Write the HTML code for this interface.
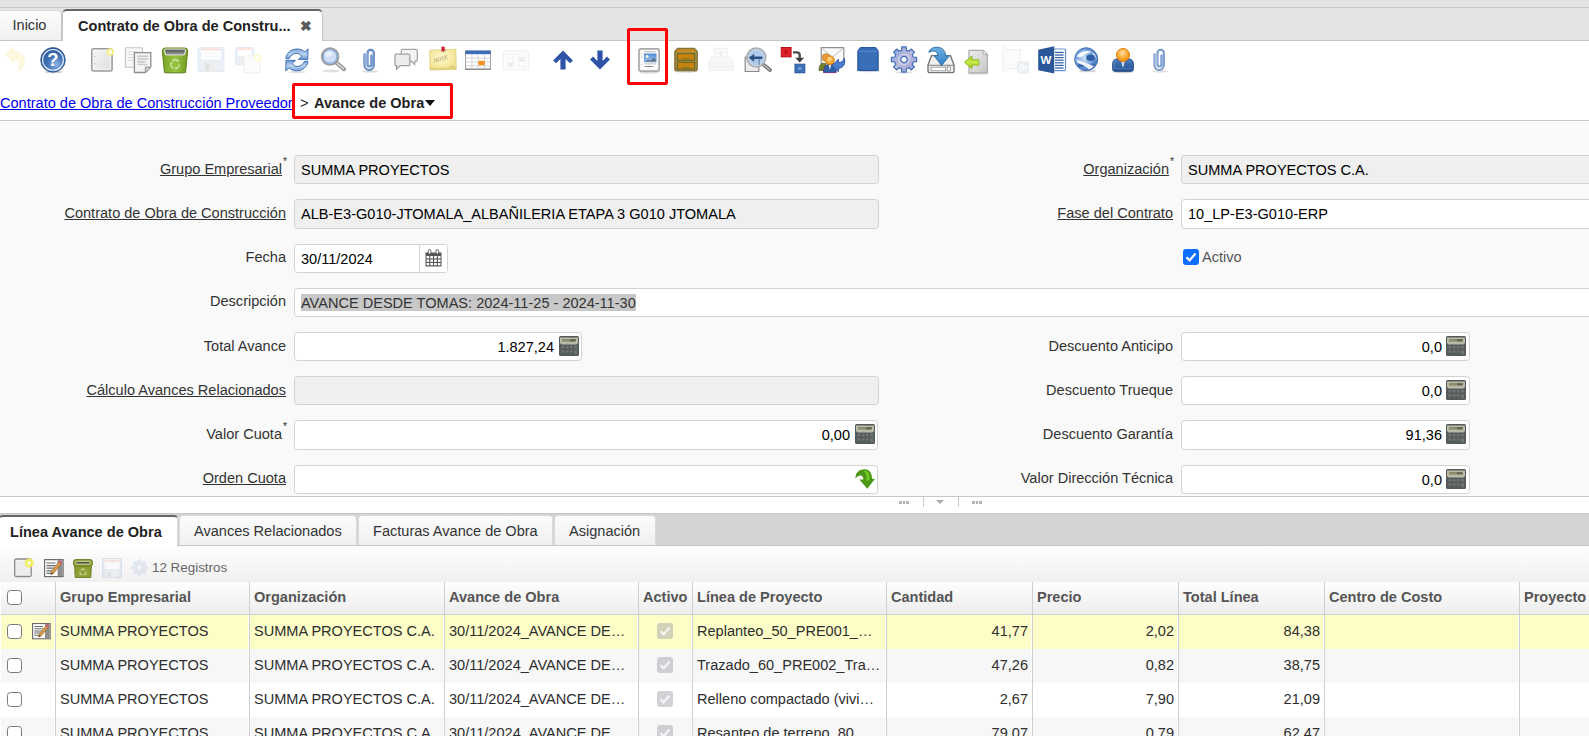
<!DOCTYPE html>
<html lang="es">
<head>
<meta charset="utf-8">
<title>Contrato de Obra de Construcción Proveedor</title>
<style>
*{box-sizing:border-box}
html,body{margin:0;padding:0}
body{width:1589px;height:736px;overflow:hidden;position:relative;background:#f9f9f9;font-family:"Liberation Sans",Arial,sans-serif;font-size:14.55px;color:#333}
.abs{position:absolute}
#topstrip{left:0;top:0;width:1589px;height:8px;background:#e4e4e4;border-bottom:1px solid #c9c9c9}
#tabbar{left:0;top:8px;width:1589px;height:33px;background:#e4e4e4;border-bottom:1px solid #c5c5c5}
.toptab{position:absolute;white-space:nowrap;font-size:14.55px;line-height:17px}
#tab1{left:-1px;top:10px;width:63px;height:31px;border:1px solid #c5c5c5;border-top-color:#d6d6d6;border-radius:0 5px 0 0;background:linear-gradient(#fdfdfd,#f0f0f0);padding:6px 0 0 12.500px;color:#333}
#tab2{left:62px;top:9px;width:261px;height:33px;border:1px solid #c5c5c5;border-top:2px solid #666;border-bottom:none;border-radius:5px 5px 0 0;background:#fff;padding:7px 0 0 15px;font-weight:bold;color:#222}
#tab2 .x{position:absolute;left:236.500px;top:7px;font-size:13.800px;color:#5a5a5a}
#toolbar{left:0;top:41px;width:1589px;height:43px;background:#fff}
#crumb{left:0;top:84px;width:1589px;height:37px;background:#fff;border-bottom:1px solid #c9c9c9}
#crumb a{position:absolute;left:0;top:11px;color:#0000ee;text-decoration:underline;white-space:nowrap;line-height:17px}
#crumb .gt{position:absolute;left:300px;top:11px;line-height:17px;color:#333}
#crumb .cur{position:absolute;left:314px;top:11px;line-height:17px;font-weight:bold;color:#222;white-space:nowrap}
#redbox1{left:627px;top:28px;width:41px;height:57px;border:3px solid #ff0000;border-radius:2px}
#redbox2{left:292px;top:83px;width:161px;height:36px;border:3px solid #ff0000;border-radius:2px}
#form{left:0;top:121px;width:1589px;height:376px;background:#f9f9f9;border-bottom:1px solid #c9c9c9}
.lbl{position:absolute;white-space:nowrap;line-height:17px;text-align:right;color:#333}
.lbl u{text-decoration:underline}
.lbl sup{position:absolute;right:-7px;top:-7px;font-size:11px;line-height:11px}
.fld{position:absolute;height:29px;border:1px solid #d2d2d2;border-radius:3.5px;background:#fff;padding:0 6px;line-height:29px;white-space:nowrap;overflow:hidden;color:#000}
.fld.ro{background:#efefef;border-color:#d2d2d2}
.fld.num{text-align:right;padding-right:27px}
#split{left:0;top:497px;width:1589px;height:16px;background:#fff}
#btabs{left:0;top:513px;width:1589px;height:33px;background:#d3d3d3;border-top:1px solid #c7c7c7;border-bottom:1px solid #c7c7c7}
.btab{position:absolute;top:515px;height:30px;border:1px solid #dadada;border-bottom:none;border-radius:4px 4px 0 0;background:linear-gradient(#fcfcfc,#f0f0f0);line-height:17px;padding:7px 0 0 14px;text-align:left;white-space:nowrap;color:#333}
.btab.act{top:515px;height:32px;background:#fff;border-top:2px solid #666;font-weight:bold;color:#222;padding:7px 0 0 10px}
#gtool{left:0;top:546px;width:1589px;height:36px;background:linear-gradient(#fefefe,#f0f0f0)}
#ghead{left:0;top:582px;width:1589px;height:33px;background:linear-gradient(#fefefe,#ededed);border-bottom:1px solid #cfcfcf}
.hc{position:absolute;top:0;height:32px;line-height:30px;font-weight:bold;color:#555;border-left:1px solid #cfcfcf;padding-left:4px;white-space:nowrap;overflow:hidden}
.row{position:absolute;left:0;width:1589px;height:34px;background:#fff}
.row.odd{background:#f7f7f7}
.row.sel{background:#fdfdc8}
.c{position:absolute;top:0;height:34px;line-height:33px;border-left:1px solid #cfcfcf;padding:0 4px;white-space:nowrap;overflow:hidden;text-overflow:ellipsis;color:#2e2e2e;box-shadow:-1px 0 0 rgba(255,255,255,.85)}
.c.r{text-align:right}
.req{font-size:10.5px;position:absolute;right:-5px;top:-5.5px;line-height:11px}
.selt{background:#c8c8c8;color:#333;padding:1px 0 0 0}
.chk{width:16px;height:16px;border-radius:3px;background:#0d6efd}
.calc{position:absolute;right:3px;top:3px}
.calbtn{position:absolute;right:0;top:0;width:28px;height:27px;border-left:1px solid #d4d4d4;background:#fff}
.dcb{position:absolute;left:18px;top:8px;width:16px;height:16px;border-radius:3px;background:rgba(160,160,168,.46)}
.dcb svg{display:block}
.caret{position:absolute;left:425px;top:16px;width:0;height:0;border-left:5.5px solid transparent;border-right:5.5px solid transparent;border-top:6px solid #111}
.tbi{position:absolute;top:45px;overflow:visible}
.cb{position:absolute;width:15px;height:15px;border:1.3px solid #7a7a7a;border-radius:3.5px;background:#fff}
</style>
</head>
<body>
<svg width="0" height="0" style="position:absolute"><defs>
<!--GR--><radialGradient id="g-help" cx=".62" cy=".68" r=".75"><stop offset="0" stop-color="#8db4e6"/><stop offset=".45" stop-color="#3f71b7"/><stop offset="1" stop-color="#2a5596"/></radialGradient>
<linearGradient id="g-paper" x1="0" y1="0" x2="1" y2="1"><stop offset="0" stop-color="#f6f6f6"/><stop offset="1" stop-color="#dedede"/></linearGradient>
<linearGradient id="g-bin" x1="0" y1="0" x2="1" y2="0"><stop offset="0" stop-color="#7ba428"/><stop offset=".5" stop-color="#98c440"/><stop offset="1" stop-color="#739c24"/></linearGradient>
<linearGradient id="g-binin" x1="0" y1="0" x2="0" y2="1"><stop offset="0" stop-color="#4e504c"/><stop offset="1" stop-color="#9c9e98"/></linearGradient>
<linearGradient id="g-ref" x1="0" y1="0" x2="0" y2="1"><stop offset="0" stop-color="#7aa4dc"/><stop offset=".5" stop-color="#bcd3ef"/><stop offset="1" stop-color="#6a97d5"/></linearGradient>
<radialGradient id="g-note" cx=".45" cy=".4" r=".75"><stop offset="0" stop-color="#fdf7cc"/><stop offset=".6" stop-color="#f6e9a0"/><stop offset="1" stop-color="#ead678"/></radialGradient>
<linearGradient id="g-sky" x1="0" y1="0" x2="0" y2="1"><stop offset="0" stop-color="#4f8fdc"/><stop offset="1" stop-color="#a9cbf0"/></linearGradient>
<radialGradient id="g-head" cx=".45" cy=".35" r=".7"><stop offset="0" stop-color="#ffe0a8"/><stop offset=".5" stop-color="#fbaf3c"/><stop offset="1" stop-color="#ef8a08"/></radialGradient>
<linearGradient id="g-gear" x1="0" y1="0" x2="1" y2="1"><stop offset="0" stop-color="#7f9fd8"/><stop offset=".5" stop-color="#bdbbdc"/><stop offset="1" stop-color="#8a98cf"/></linearGradient>
<linearGradient id="g-exp" x1="0" y1="0" x2="0" y2="1"><stop offset="0" stop-color="#6fb0e4"/><stop offset="1" stop-color="#2f7fc4"/></linearGradient>
<linearGradient id="g-doc" x1="0" y1="0" x2="1" y2="1"><stop offset="0" stop-color="#eeeeee"/><stop offset="1" stop-color="#c6c6c6"/></linearGradient>
<linearGradient id="g-grn" x1="0" y1="0" x2="0" y2="1"><stop offset="0" stop-color="#9fd01e"/><stop offset=".5" stop-color="#c8ec4a"/><stop offset="1" stop-color="#8cc010"/></linearGradient>
<radialGradient id="g-globe" cx=".42" cy=".45" r=".62"><stop offset="0" stop-color="#cfe1f7"/><stop offset=".55" stop-color="#7ba6de"/><stop offset="1" stop-color="#3a6bb4"/></radialGradient>
<filter id="f-blur" x="-20%" y="-20%" width="140%" height="140%"><feGaussianBlur stdDeviation=".55"/></filter>
<linearGradient id="g-suit" x1="0" y1="0" x2="0" y2="1"><stop offset="0" stop-color="#4a7bc0"/><stop offset="1" stop-color="#24508f"/></linearGradient>
<!--/GR-->
</defs></svg>
<div id="topstrip" class="abs"></div>
<div id="tabbar" class="abs"></div>
<div id="tab1" class="toptab">Inicio</div>
<div id="tab2" class="toptab">Contrato de Obra de Constru...<span class="x">✖</span></div>
<div id="toolbar" class="abs"></div>
<!--TB-->
<svg class="tbi" style="left:0.6px" width="28" height="30" viewBox="0 0 28 30"><path d="M4.600 9.200L13 2.200L13 6.500C20 7 23.400 12 23.400 17C23.400 21 21 24 17 25.300C19 22 18.500 18.500 17 16.300C16 14.800 14.500 13.800 13 13.700L13 17.800Z" fill="#fcf9e0" stroke="#f8f3d2" stroke-width=".8"/></svg>
<svg class="tbi" style="left:39.4px" width="28" height="30" viewBox="0 0 28 30"><ellipse cx="14.500" cy="27" rx="9" ry="1.300" fill="#000" opacity=".18"/><circle cx="14" cy="14.900" r="12.300" fill="url(#g-help)" stroke="#2c5590" stroke-width=".8"/><circle cx="14" cy="14.900" r="10.400" fill="none" stroke="#fff" stroke-width="1.100" opacity=".9"/><text x="14" y="21.300" text-anchor="middle" font-family="Liberation Sans,sans-serif" font-weight="bold" font-size="18.500" fill="#fff">?</text></svg>
<svg class="tbi" style="left:88px" width="28" height="30" viewBox="0 0 28 30"><rect x="3.800" y="3.800" width="20.300" height="22.200" rx="1.500" fill="url(#g-paper)" stroke="#9c9c9c" stroke-width="1.500"/><rect x="5.600" y="5.600" width="16.700" height="18.600" fill="none" stroke="#fff" stroke-width=".8" opacity=".8"/><path d="M6.600 11.200v1.300M6.600 18v1.300" stroke="#b5b5b5" stroke-width="1"/><circle cx="22.300" cy="7" r="2.900" fill="#fffde6" stroke="#f5ee84" stroke-width="1.700"/></svg>
<svg class="tbi" style="left:124.4px" width="28" height="30" viewBox="0 0 28 30"><rect x="1.400" y="2.700" width="17" height="19.600" rx=".6" fill="#f7f7f7" stroke="#c4c4c4" stroke-width="1.100"/><path d="M4 6.700h10M4 9.600h6M4 12.500h6M4 15.400h6" stroke="#dcdcdc" stroke-width="1"/><path d="M10.400 7.600h16.400v14.500l-5.400 5.400h-11z" fill="#f3f3f3" stroke="#8e8e8e" stroke-width="1.300"/><path d="M26.800 22.100h-5.400v5.400z" fill="#d6d6d6" stroke="#8e8e8e" stroke-width="1"/><path d="M13.300 11.300h10.600M13.300 14h10.600M13.300 16.700h8M13.300 19.400h10" stroke="#c6c6c6" stroke-width="1.400"/></svg>
<svg class="tbi" style="left:161px" width="28" height="30" viewBox="0 0 28 30"><ellipse cx="14" cy="27.400" rx="12" ry="1.200" fill="#000" opacity=".22"/><path d="M1.400 6.300C1.400 4.400 2.800 3.100 4.800 3.100h18.400c2 0 3.400 1.300 3.400 3.200l-1.900 19.400c-.1 1.200-1 2-2.200 2H5.500c-1.200 0-2.100-.8-2.200-2z" fill="url(#g-bin)" stroke="#64861c" stroke-width="1.100"/><path d="M3.400 5.400c0-.8.600-1.300 1.400-1.300h18.400c.8 0 1.400.5 1.400 1.300l-.9 3.400c-.2.700-.7 1.100-1.400 1.100H5.700c-.7 0-1.200-.4-1.400-1.100z" fill="url(#g-binin)" stroke="#d4d6d0" stroke-width="1.300" stroke-linejoin="round"/><g fill="none" stroke="#dcebb8" stroke-width="1.400" opacity=".85"><path d="M11.300 15.900a3.900 3.900 0 0 1 5.800 .2"/><path d="M18.200 18.600a3.900 3.900 0 0 1 -3 4.600"/><path d="M12.300 23.100a3.900 3.900 0 0 1 -2.200 -4.800"/></g><path d="M16.900 14.200l1.500 2.400-2.700 .2zM16.400 24.200l-2.700 .1 1.300-2.300zM8.900 19.200l1.300-2.400 1.400 2.300z" fill="#dcebb8" opacity=".9"/></svg>
<svg class="tbi" style="left:197.4px" width="28" height="30" viewBox="0 0 28 30"><rect x="1.100" y="2.700" width="25.800" height="23.800" rx="1.500" fill="#ebf0f8" stroke="#e0e8f4" stroke-width="1"/><rect x="4.400" y="3.600" width="19.200" height="10.800" fill="#fff"/><rect x="4.400" y="3.600" width="19.200" height="1.700" fill="#fcd9d3"/><path d="M7.500 8.300h13M7.500 11.300h13" stroke="#f0f0f0" stroke-width=".9"/><rect x="6.400" y="17.200" width="14" height="9" fill="#eeeeef"/><rect x="8.600" y="18.400" width="3.600" height="6.800" fill="#e0e1e4"/></svg>
<svg class="tbi" style="left:233.9px" width="28" height="30" viewBox="0 0 28 30"><rect x="1.600" y="2.500" width="18" height="17.400" rx="1.200" fill="#ebf0f8" stroke="#e0e8f4" stroke-width="1"/><rect x="3.800" y="3.200" width="13.600" height="7.800" fill="#fff"/><rect x="3.800" y="3.200" width="13.600" height="1.500" fill="#fcd9d3"/><rect x="5.400" y="13" width="9.600" height="6.600" fill="#eeeeef"/><rect x="10" y="10.800" width="16" height="17" rx="1" fill="#fbfbfb" stroke="#efefef" stroke-width="1"/><circle cx="24" cy="12.800" r="3" fill="#fffef0" stroke="#fcfad2" stroke-width="1.600"/></svg>
<svg class="tbi" style="left:283.1px" width="28" height="30" viewBox="0 0 28 30"><ellipse cx="14" cy="27" rx="9" ry="1.200" fill="#000" opacity=".12"/><path d="M2.800 13.400C3.600 8 8 4 14.100 4C17.400 4 20 5.200 21.900 7L25 3.800L24.800 14.400L15.400 14.400L18.500 11.200C17.200 9.400 15.600 8.300 13.700 8.300C10.400 8.300 7.600 10.300 6.300 13.400Z" fill="url(#g-ref)" stroke="#3f70b8" stroke-width="1" stroke-linejoin="round"/><path transform="rotate(180 13.900 14.870)" d="M2.800 13.400C3.600 8 8 4 14.100 4C17.400 4 20 5.200 21.900 7L25 3.800L24.800 14.400L15.400 14.400L18.500 11.200C17.200 9.400 15.600 8.300 13.700 8.300C10.400 8.300 7.600 10.300 6.300 13.400Z" fill="url(#g-ref)" stroke="#3f70b8" stroke-width="1" stroke-linejoin="round"/></svg>
<svg class="tbi" style="left:319.3px" width="28" height="30" viewBox="0 0 28 30"><ellipse cx="12" cy="26" rx="9" ry="1.500" fill="#000" opacity=".12"/><path d="M17.600 17.800L25 24.200" stroke="#8c8c8c" stroke-width="4" stroke-linecap="round"/><path d="M18 18.200L24.800 24" stroke="#dcdcdc" stroke-width="1.600" stroke-linecap="round"/><circle cx="11.100" cy="11.600" r="8.300" fill="#cfe0f6" stroke="#9b9b9b" stroke-width="1.900"/><circle cx="11.100" cy="11.600" r="6.800" fill="none" stroke="#86aee6" stroke-width="1.100"/><ellipse cx="9.500" cy="9" rx="4" ry="2.800" fill="#fff" opacity=".45"/></svg>
<svg class="tbi" style="left:354.9px" width="28" height="30" viewBox="0 0 28 30"><ellipse cx="15" cy="26.500" rx="8" ry="1" fill="#000" opacity=".15"/><path d="M16.400 10.500L16.400 19.600A1.950 1.950 0 0 1 12.500 19.600L12.500 8A3.150 3.150 0 0 1 18.800 8L18.800 20.300A4.650 4.650 0 0 1 9.500 20.300L9.500 9.300" fill="none" stroke="#4573b8" stroke-width="2.100" stroke-linecap="round"/><path d="M16.400 10.500L16.400 19.600A1.950 1.950 0 0 1 12.500 19.600L12.500 8A3.150 3.150 0 0 1 18.800 8L18.800 20.300A4.650 4.650 0 0 1 9.500 20.300L9.500 9.300" fill="none" stroke="#a9c4ea" stroke-width=".6" stroke-linecap="round"/></svg>
<svg class="tbi" style="left:391.7px" width="28" height="30" viewBox="0 0 28 30"><path d="M10.500 4.400h13.600a1.200 1.200 0 0 1 1.200 1.200v9.400a1.200 1.200 0 0 1 -1.200 1.200h-1.400v3.200l-3.400-3.200h-8.800a1.200 1.200 0 0 1 -1.200-1.200v-9.400a1.200 1.200 0 0 1 1.200-1.200z" fill="#f3f3f3" stroke="#a6a6a6" stroke-width="1.300"/><path d="M4.200 9.200h12.400a1.200 1.200 0 0 1 1.200 1.200v9a1.200 1.200 0 0 1 -1.200 1.200h-8.400l-3.600 3.600v-3.600h-.4a1.200 1.200 0 0 1 -1.200-1.200v-9a1.200 1.200 0 0 1 1.200-1.200z" fill="#ececec" stroke="#a0a0a0" stroke-width="1.300"/></svg>
<svg class="tbi" style="left:428.5px" width="28" height="30" viewBox="0 0 28 30"><path d="M1.400 6L27 5L27.600 24.800L1.600 25.400Z" fill="#cfc38a" opacity=".55"/><path d="M0.800 5.200L26.800 4.200L27.200 24.200L1 24.800Z" fill="url(#g-note)" stroke="#decf86" stroke-width=".8"/><path d="M1 22.800L27.200 22.300L27.200 24.200L1 24.800Z" fill="#dcc468" opacity=".55"/><text x="5.200" y="18" transform="rotate(-17 5.200 18)" font-family="Liberation Serif,serif" font-style="italic" font-weight="bold" font-size="6" letter-spacing="-.4" fill="#a39a6a" opacity=".8">NOTE</text><path d="M20.500 21.800l2.200-.9.800 1.200M23.800 21.600l1.200-.6" stroke="#c9b45e" stroke-width=".7" fill="none"/><path d="M12.600 2.100l2.700-.3.300 3 .7 1-4 .5.500-1.200z" fill="#d42232" stroke="#b0121e" stroke-width=".4"/><path d="M14.300 6.200l.3 1.800" stroke="#999" stroke-width=".8"/></svg>
<svg class="tbi" style="left:464.4px" width="28" height="30" viewBox="0 0 28 30"><rect x="1.500" y="5.900" width="25" height="18.300" fill="#fff" stroke="#a2a2a2" stroke-width="1"/><path d="M7.9 9.400v14.400" stroke="#d4d4d4" stroke-width="1"/><path d="M14.1 9.400v14.400" stroke="#d4d4d4" stroke-width="1"/><path d="M20.5 9.400v14.400" stroke="#d4d4d4" stroke-width="1"/><path d="M1.800 13.2h24.400" stroke="#d4d4d4" stroke-width="1"/><path d="M1.800 17h24.400" stroke="#d4d4d4" stroke-width="1"/><path d="M1.800 20.8h24.400" stroke="#d4d4d4" stroke-width="1"/><rect x="1.300" y="5.600" width="25.400" height="3.600" fill="#3c6db7"/><rect x="1" y="23.600" width="26" height="1.400" fill="#8f8f8f"/><rect x="14.300" y="15.800" width="6.500" height="4.400" rx="1.200" fill="#f6921e"/></svg>
<svg class="tbi" style="left:501.6px" width="28" height="30" viewBox="0 0 28 30"><rect x="1.200" y="5.800" width="25.600" height="19.200" rx="1.200" fill="#fcfcfc" stroke="#f0f0f0" stroke-width="1.200"/><path d="M4 8.800h13" stroke="#f1f1f1" stroke-width="1.200"/><rect x="5.500" y="13" width="6" height="8.800" fill="#edefef"/><rect x="6.400" y="13.800" width="4.200" height="3" fill="#fff"/><rect x="16.500" y="12" width="6.600" height="9.800" fill="#edefef"/><rect x="17.300" y="17" width="5" height="3.800" fill="#fff"/></svg>
<svg class="tbi" style="left:549.4px" width="28" height="30" viewBox="0 0 28 30"><path d="M14 5.500L23.900 15.400L21 18.300L16.600 13.900L16.600 24.400L11.400 24.400L11.400 13.900L7 18.300L4.100 15.400Z" fill="#2f53a7"/></svg>
<svg class="tbi" style="left:586.4px" width="28" height="30" viewBox="0 0 28 30"><path transform="matrix(1 0 0 -1 0 29.900)" d="M14 5.500L23.900 15.400L21 18.300L16.600 13.900L16.600 24.400L11.400 24.400L11.400 13.900L7 18.300L4.100 15.400Z" fill="#2f53a7"/></svg>
<svg class="tbi" style="left:635px" width="28" height="30" viewBox="0 0 28 30"><ellipse cx="14" cy="27.600" rx="10" ry="1" fill="#000" opacity=".15"/><rect x="4" y="3.900" width="20.200" height="22.200" rx="1.800" fill="#f7f7f7" stroke="#aaaaaa" stroke-width="1.700"/><rect x="5.700" y="5.600" width="16.800" height="18.800" fill="#fff" opacity=".7"/><path d="M6.800 11.500v1.200M6.800 18.600v1.200" stroke="#bbb" stroke-width="1"/><path d="M9.500 6.800h11.500" stroke="#b8b8b8" stroke-width="1"/><rect x="9.300" y="8.900" width="11.800" height="8" fill="url(#g-sky)" stroke="#5a8fd6" stroke-width=".7"/><path d="M9.600 16.600l3.500-2 2.500 1 3-3.200 2.300 2.400v1.800z" fill="#5a6a7a" opacity=".85"/><circle cx="12.200" cy="11.500" r="1.400" fill="#fdf6c8"/><path d="M9.500 18.900h11.500" stroke="#c4c4c4" stroke-width="1"/><path d="M9.500 21.500h9" stroke="#8c8c8c" stroke-width="1"/></svg>
<svg class="tbi" style="left:671.5px" width="28" height="30" viewBox="0 0 28 30"><ellipse cx="14" cy="26.400" rx="11" ry="1.200" fill="#000" opacity=".2"/><path d="M5.600 3.400h16.800l2.800 3.200v17.600a1.500 1.500 0 0 1 -1.500 1.500h-19.400a1.500 1.500 0 0 1 -1.500-1.500v-17.600z" fill="#a08c4c" stroke="#857334" stroke-width="1.300"/><path d="M5.800 4.200h16.400l2 2.600h-20.400z" fill="#c98a1c"/><rect x="5.400" y="8.600" width="17.200" height="6.700" fill="#c8820f" stroke="#6f6a1d" stroke-width="1.100"/><rect x="5.400" y="17.300" width="17.200" height="6.700" fill="#c8820f" stroke="#6f6a1d" stroke-width="1.100"/><path d="M11 15.300v-1.500h6v1.500M11 24v-1.500h6v1.500" fill="none" stroke="#7d7a2a" stroke-width="1.100"/></svg>
<svg class="tbi" style="left:707.4px" width="28" height="30" viewBox="0 0 28 30"><path d="M7.500 3.400h12.600v9h-12.600z" fill="#fbfbfb" stroke="#efefef" stroke-width="1.100"/><path d="M13.800 5.500l-3 3h2.100v2.400h1.800v-2.400h2.100z" fill="#ececec"/><path d="M5 12.200h18l3.200 5v6.500a1.500 1.500 0 0 1 -1.500 1.500h-21.400a1.500 1.500 0 0 1 -1.500-1.500v-6.500z" fill="#f8f8f8" stroke="#eeeeee" stroke-width="1.100"/><path d="M2.400 18h23.200M5 21.500h18" stroke="#efefef" stroke-width="1.100"/></svg>
<svg class="tbi" style="left:744px" width="28" height="30" viewBox="0 0 28 30"><path d="M1.200 12h8l5.600 3v11.500h-13.600z" fill="#ececec" stroke="#8a8a8a" stroke-width="1.200"/><path d="M19.300 19.500L26 25" stroke="#777" stroke-width="3.800" stroke-linecap="round"/><path d="M19.800 19.900L25.700 24.700" stroke="#bdbdbd" stroke-width="1.300" stroke-linecap="round"/><circle cx="12.300" cy="12.600" r="9.300" fill="#a9c5ea" fill-opacity=".92" stroke="#aeaeae" stroke-width="1.900"/><circle cx="12.300" cy="12.600" r="7.900" fill="none" stroke="#c9dcf4" stroke-width="1"/><path d="M4.600 12.700l5.600-4v2.700h8.200v2.600h-8.200v2.700z" fill="#2e4f84"/><path d="M15.200 13.800v6" stroke="#4a6a9a" stroke-width="1" opacity=".8"/></svg>
<svg class="tbi" style="left:779.3px" width="28" height="30" viewBox="0 0 28 30"><rect x="2.200" y="2.500" width="9.900" height="9.400" fill="#e0202a" stroke="#b00812" stroke-width=".9"/><rect x="5.300" y="5.400" width="3.700" height="3.600" fill="#c4101a"/><path d="M14 7.300h3.800c2 0 2.900 1 2.900 2.800v3.400" fill="none" stroke="#4a4a4a" stroke-width="2.300"/><path d="M16.200 12.800h9l-4.500 4.800z" fill="#3c3c3c"/><rect x="16" y="19.200" width="9.800" height="8.600" fill="#3f74bd" stroke="#2a529a" stroke-width="1"/><rect x="18.600" y="21.600" width="4.600" height="3.900" fill="#6b98d6" stroke="#2f5faa" stroke-width=".7"/></svg>
<svg class="tbi" style="left:817.5px" width="28" height="30" viewBox="0 0 28 30"><path d="M3.200 2.600h22.600v16h-22.600z" fill="#fafafa" stroke="#8f8f8f" stroke-width="1.200"/><path d="M3.400 2.800l11.100 9.400 11.100-9.400" fill="none" stroke="#bdbdbd" stroke-width="1"/><path d="M1 25.400c0-4.500 1.500-7 4.200-7s3.600 2 3.600 4.500v2.500z" fill="#6d7f2c" stroke="#55641d" stroke-width=".7"/><circle cx="8" cy="12.600" r="3.900" fill="#e89a3c" stroke="#c4781c" stroke-width=".7"/><path d="M5.500 27.600c0-5 2-8.400 6.400-8.400s6.300 3.400 6.300 8.400z" fill="#2d5ea8" stroke="#6a2a7a" stroke-width=".9"/><path d="M10.700 19.600l1.200 5.400 1.200-5.400z" fill="#fff"/><circle cx="11.900" cy="15.300" r="4.400" fill="url(#g-head)" stroke="#d27a10" stroke-width=".8"/><path d="M14 20.400l6.400-6v3.300c3.500-.3 5.400-1.800 5.900-4.600c1.500 5.600-1 10-5.900 10.300v3.300z" fill="#4a7fcf" stroke="#2b57a6" stroke-width="1"/></svg>
<svg class="tbi" style="left:853.8px" width="28" height="30" viewBox="0 0 28 30"><ellipse cx="15" cy="26" rx="11" ry="1.200" fill="#000" opacity=".18"/><path d="M6.600 2.700h14.800l2.700 3.400v19.200h-20.200v-19.200z" fill="#3a6eb6" stroke="#2a58a4" stroke-width="1.300" stroke-linejoin="round"/><path d="M4.600 6.300h18.800" stroke="#6d97d4" stroke-width=".9" opacity=".8"/></svg>
<svg class="tbi" style="left:889.9px" width="28" height="30" viewBox="0 0 28 30"><ellipse cx="14" cy="27.400" rx="9" ry="1.100" fill="#000" opacity=".13"/><path d="M11.49 5.24L11.84 1.88L16.16 1.88L16.51 5.24L18.77 6.17L21.39 4.05L24.45 7.11L22.33 9.73L23.26 11.99L26.62 12.34L26.62 16.66L23.26 17.01L22.33 19.27L24.45 21.89L21.39 24.95L18.77 22.83L16.51 23.76L16.16 27.12L11.84 27.12L11.49 23.76L9.23 22.83L6.61 24.95L3.55 21.89L5.67 19.27L4.74 17.01L1.38 16.66L1.38 12.34L4.74 11.99L5.67 9.73L3.55 7.11L6.61 4.05L9.23 6.17ZM14 11.400a3.100 3.100 0 1 0 0 6.200a3.100 3.100 0 1 0 0-6.200z" fill="url(#g-gear)" stroke="#3f6fb8" stroke-width="1.200" stroke-linejoin="round" fill-rule="evenodd"/><circle cx="14" cy="14.500" r="5.300" fill="none" stroke="#e2e4f6" stroke-width="1" opacity=".8"/></svg>
<svg class="tbi" style="left:926.5px" width="28" height="30" viewBox="0 0 28 30"><path d="M4.600 10.600h18.800l3.600 9.400v6a1.600 1.600 0 0 1 -1.600 1.600h-22.800a1.600 1.600 0 0 1 -1.600-1.600v-6z" fill="#f0f0f0" stroke="#767676" stroke-width="1.400" stroke-linejoin="round"/><path d="M1.400 20.300h25.200" stroke="#8a8a8a" stroke-width="1.100"/><rect x="4" y="22.200" width="14.600" height="3.600" fill="#fff" stroke="#9a9a9a" stroke-width=".9"/><rect x="20.300" y="21.800" width="3.200" height="4.200" fill="#fff" stroke="#8a8a8a" stroke-width=".8"/><path d="M1.800 7.400C3 3.400 7 1.800 11.400 2.400c4.600.6 7.200 4 7.200 8.400h3.600l-7.600 9.800-7.400-9.800h3.700c0-2.600-1.400-4.400-4-4.700c-2-.2-3.800.3-5.100 1.300z" fill="url(#g-exp)" stroke="#2f6ea8" stroke-width="1"/></svg>
<svg class="tbi" style="left:962.2px" width="28" height="30" viewBox="0 0 28 30"><ellipse cx="16" cy="28.700" rx="11" ry="1" fill="#000" opacity=".12"/><path d="M7 5.400h14.200l4.200 4.200v18.200h-18.400z" fill="url(#g-doc)" stroke="#aaaaaa" stroke-width="1.200"/><path d="M21.200 5.400v4.200h4.200z" fill="#f3f3f3" stroke="#aaaaaa" stroke-width=".9"/><path d="M2.400 17.300l7.600-6.300v3.700h6.800v5.400h-6.800v3.700z" fill="url(#g-grn)" stroke="#8ab81a" stroke-width=".9" stroke-linejoin="round"/></svg>
<svg class="tbi" style="left:1000.5px" width="28" height="30" viewBox="0 0 28 30"><path d="M2.200 1.800c1.600-1 3-.4 3 1.200v1.600h14v19h-14v2.400h-3.600v-22.400z" fill="#fbfbfb" stroke="#f1f1f1" stroke-width="1.100"/><rect x="16.200" y="16.200" width="12" height="12.400" rx="1.600" fill="#e9eef3"/><path d="M19.200 19.200h2.400v6.400h-2.400zM27 22.400h-4.600M24.400 20.400l-2.200 2 2.200 2" fill="none" stroke="#fbfcfd" stroke-width="1.400"/></svg>
<svg class="tbi" style="left:1037.5px" width="28" height="30" viewBox="0 0 28 30"><rect x="14" y="4" width="13.500" height="21.600" rx="1" fill="#fff" stroke="#6a8fcc" stroke-width="1.200"/><path d="M17 7.4h8.600" stroke="#2f5fa8" stroke-width="1.250"/><path d="M17 10h8.600" stroke="#2f5fa8" stroke-width="1.250"/><path d="M17 12.6h8.600" stroke="#2f5fa8" stroke-width="1.250"/><path d="M17 15.2h8.600" stroke="#2f5fa8" stroke-width="1.250"/><path d="M17 17.8h8.600" stroke="#2f5fa8" stroke-width="1.250"/><path d="M17 20.4h8.600" stroke="#2f5fa8" stroke-width="1.250"/><path d="M17 23h8.600" stroke="#2f5fa8" stroke-width="1.250"/><path d="M0.200 4.800L16.200 1.200L16.200 28.600L0.200 25.200Z" fill="#2b579a"/><text x="8" y="19.300" text-anchor="middle" font-family="Liberation Sans,sans-serif" font-weight="bold" font-size="11.500" fill="#fff">W</text></svg>
<svg class="tbi" style="left:1071.7px" width="28" height="30" viewBox="0 0 28 30"><ellipse cx="15.500" cy="26" rx="9" ry="1.300" fill="#000" opacity=".16"/><circle cx="14.200" cy="14.200" r="11.500" fill="url(#g-globe)" stroke="#3d6db4" stroke-width=".9"/><g filter="url(#f-blur)"><ellipse cx="18.500" cy="12.800" rx="4.200" ry="3.200" fill="#2f5fa6"/><ellipse cx="9.400" cy="20" rx="3.200" ry="2" fill="#3566ad"/><ellipse cx="21" cy="20.500" rx="2" ry="2.600" fill="#3a6bb2" opacity=".8"/><path d="M4.800 11.500c1.500-3 5-5.200 9-5.500c2.500-.2 4.500 .3 6 1.200c-3 .3-6 1.200-8 3c-2 1.800-4.500 2.200-7 1.300z" fill="#fff" opacity=".95"/><path d="M4.200 14.500c3 1.500 6.500 1.800 9.500 3.200c3 1.400 5.500 3 8.300 3.300c-1.500 2-3.500 3-5.500 3.300c-2-2.500-5-4-8-5c-2-.7-3.500-2.300-4.300-4.800z" fill="#fff" opacity=".9"/><path d="M21.500 7.500c2 2 3.300 4.500 3.300 7.500c-1-2.500-2.500-4.500-4.800-6z" fill="#fff" opacity=".6"/></g></svg>
<svg class="tbi" style="left:1109px" width="28" height="30" viewBox="0 0 28 30"><ellipse cx="14" cy="27" rx="10" ry="1.200" fill="#000" opacity=".2"/><path d="M3.700 24.600V18.800C3.700 15.600 5.600 14 8.400 14H19.600C22.400 14 24.300 15.600 24.300 18.800V24.600C24.300 25.700 23.500 26.300 22.500 26.300H5.500C4.500 26.300 3.700 25.700 3.700 24.600Z" fill="url(#g-suit)" stroke="#204a87" stroke-width="1"/><path d="M11.800 14.200l2.200 8.600 2.200-8.600z" fill="#fff"/><path d="M13.600 15.600h.8l.5 4.300-.9 2.200-.9-2.200z" fill="#c9d6ea"/><path d="M4.600 23.800h18.800" stroke="#6f98d2" stroke-width=".8" opacity=".7"/><path d="M5 24V18.800C5 16.400 6.400 15.200 8.400 15.200" fill="none" stroke="#7fa4da" stroke-width=".7" opacity=".7"/><circle cx="14" cy="10" r="6.500" fill="url(#g-head)" stroke="#e07a00" stroke-width="1"/></svg>
<svg class="tbi" style="left:1144.9px" width="28" height="30" viewBox="0 0 28 30"><ellipse cx="15" cy="26.500" rx="8" ry="1" fill="#000" opacity=".13"/><path d="M16.400 10.500L16.400 19.600A1.950 1.950 0 0 1 12.500 19.600L12.500 8A3.150 3.150 0 0 1 18.800 8L18.800 20.300A4.650 4.650 0 0 1 9.500 20.300L9.500 9.300" fill="none" stroke="#5a83c2" stroke-width="2" stroke-linecap="round"/><path d="M16.400 10.500L16.400 19.600A1.950 1.950 0 0 1 12.500 19.600L12.500 8A3.150 3.150 0 0 1 18.800 8L18.800 20.300A4.650 4.650 0 0 1 9.500 20.300L9.500 9.300" fill="none" stroke="#c4d6f0" stroke-width=".5" stroke-linecap="round"/></svg>
<!--/TB-->
<div id="crumb" class="abs"><a>Contrato de Obra de Construcción Proveedor</a><span class="gt">&gt;</span><span class="cur">Avance de Obra</span><span class="caret"></span></div>
<div id="redbox1" class="abs"></div>
<div id="redbox2" class="abs"></div>
<div id="form" class="abs"></div>
<!--FORM-->
<div class="lbl" style="right:1307px;top:161px"><u>Grupo Empresarial</u><span class="req">*</span></div>
<div class="fld ro" style="left:294px;top:155px;width:585px;height:29px;line-height:29px">SUMMA PROYECTOS</div>
<div class="lbl" style="right:1303px;top:205px"><u>Contrato de Obra de Construcción</u></div>
<div class="fld ro" style="left:294px;top:199px;width:585px;height:30px;line-height:29px">ALB-E3-G010-JTOMALA_ALBAÑILERIA ETAPA 3 G010 JTOMALA</div>
<div class="lbl" style="right:1303px;top:249px">Fecha</div>
<div class="fld " style="left:294px;top:244px;width:154px;height:29px;line-height:29px">30/11/2024<span class="calbtn"><svg width="17" height="18" viewBox="0 0 17 18" style="position:absolute;left:5px;top:4px"><path d="M0.500 3.500h16v14h-16z" fill="#555"/><g fill="#fff"><rect x="1.600" y="7" width="2.600" height="2.400"/><rect x="5.300" y="7" width="2.700" height="2.400"/><rect x="9.100" y="7" width="2.700" height="2.400"/><rect x="12.900" y="7" width="2.600" height="2.400"/><rect x="1.600" y="10.500" width="2.600" height="2.400"/><rect x="5.300" y="10.500" width="2.700" height="2.400"/><rect x="9.100" y="10.500" width="2.700" height="2.400"/><rect x="12.900" y="10.500" width="2.600" height="2.400"/><rect x="1.600" y="14" width="2.600" height="2.300"/><rect x="5.300" y="14" width="2.700" height="2.300"/><rect x="9.100" y="14" width="2.700" height="2.300"/><rect x="12.900" y="14" width="2.600" height="2.300"/></g><rect x="3.300" y="0.500" width="2.600" height="4.500" rx="1.300" fill="#fff" stroke="#555" stroke-width="0.900"/><rect x="11" y="0.500" width="2.600" height="4.500" rx="1.300" fill="#fff" stroke="#555" stroke-width="0.900"/></svg></span></div>
<div class="lbl" style="right:1303px;top:293px">Descripción</div>
<div class="fld " style="left:294px;top:288px;width:1310px;height:29px;line-height:29px"><span class="selt">AVANCE DESDE TOMAS: 2024-11-25 - 2024-11-30</span></div>
<div class="lbl" style="right:1303px;top:338px">Total Avance</div>
<div class="fld num" style="left:294px;top:332px;width:288px;height:29px;line-height:29px">1.827,24<svg class="calc" style="right:2px" width="20" height="20" viewBox="0 0 20 20"><rect x="0" y="0" width="20" height="20" rx="1.5" fill="#555a5a"/><path d="M1 1.5h18v5.5l-1.5 1.5h-15l-1.5-1.500z" fill="#b9bba8"/><rect x="3" y="3" width="14" height="2.600" fill="#8a8c6e"/><rect x="11" y="3.300" width="5.500" height="2" fill="#5f6150"/><g fill="#6f7474"><rect x="2.500" y="10" width="2.800" height="2.500"/><rect x="6.700" y="10" width="2.800" height="2.500"/><rect x="10.800" y="10" width="2.800" height="2.500"/><rect x="15" y="10" width="3.200" height="2.500"/><rect x="2.500" y="14.200" width="2.800" height="2.500"/><rect x="6.700" y="14.200" width="2.800" height="2.500"/><rect x="10.800" y="14.200" width="2.800" height="2.500"/><rect x="15" y="14.200" width="3.200" height="4"/></g></svg></div>
<div class="lbl" style="right:1303px;top:382px"><u>Cálculo Avances Relacionados</u></div>
<div class="fld ro" style="left:294px;top:376px;width:585px;height:29px;line-height:29px"></div>
<div class="lbl" style="right:1307px;top:426px">Valor Cuota<span class="req">*</span></div>
<div class="fld num" style="left:294px;top:420px;width:584px;height:30px;line-height:29px">0,00<svg class="calc" style="right:2px" width="20" height="20" viewBox="0 0 20 20"><rect x="0" y="0" width="20" height="20" rx="1.5" fill="#555a5a"/><path d="M1 1.5h18v5.5l-1.5 1.5h-15l-1.5-1.500z" fill="#b9bba8"/><rect x="3" y="3" width="14" height="2.600" fill="#8a8c6e"/><rect x="11" y="3.300" width="5.500" height="2" fill="#5f6150"/><g fill="#6f7474"><rect x="2.500" y="10" width="2.800" height="2.500"/><rect x="6.700" y="10" width="2.800" height="2.500"/><rect x="10.800" y="10" width="2.800" height="2.500"/><rect x="15" y="10" width="3.200" height="2.500"/><rect x="2.500" y="14.200" width="2.800" height="2.500"/><rect x="6.700" y="14.200" width="2.800" height="2.500"/><rect x="10.800" y="14.200" width="2.800" height="2.500"/><rect x="15" y="14.200" width="3.200" height="4"/></g></svg></div>
<div class="lbl" style="right:1303px;top:470px"><u>Orden Cuota</u></div>
<div class="fld " style="left:294px;top:465px;width:584px;height:29px;line-height:29px"><svg width="20" height="20" viewBox="0 0 20 20" style="position:absolute;right:2.500px;top:2.800px"><path d="M0.600 9.600C0 3.600 4.500 0.300 9.500 0.300C14.800 0.300 17 4.500 17 9.800L20 9.800L12.300 19.800L4.300 10.600L8.300 10.600C8.300 7.600 7 6.300 5 6.600C3 6.900 1.600 8.200 0.600 9.600z" fill="#4c9716"/><path d="M8.500 1.500C13 1.300 15 5 14.500 10.500L11.200 12.500C12 7 11 3.500 8.500 1.500z" fill="#7cdc2c" opacity=".75"/></svg></div>
<div class="lbl" style="right:420px;top:161px"><u>Organización</u><span class="req">*</span></div>
<div class="fld ro" style="left:1181px;top:155px;width:420px;height:29px;line-height:29px">SUMMA PROYECTOS C.A.</div>
<div class="lbl" style="right:416px;top:205px"><u>Fase del Contrato</u></div>
<div class="fld " style="left:1181px;top:199px;width:420px;height:30px;line-height:29px">10_LP-E3-G010-ERP</div>
<div class="chk abs" style="left:1183px;top:249px"><svg width="16" height="16" viewBox="0 0 16 16"><path d="M3.5 8.2 L6.6 11.3 L12.5 4.6" fill="none" stroke="#fff" stroke-width="2.2"/></svg></div><div class="lbl" style="left:1202px;top:249px;color:#555">Activo</div>
<div class="lbl" style="right:416px;top:338px">Descuento Anticipo</div>
<div class="fld num" style="left:1181px;top:332px;width:289px;height:29px;line-height:29px">0,0<svg class="calc" width="20" height="20" viewBox="0 0 20 20"><rect x="0" y="0" width="20" height="20" rx="1.5" fill="#555a5a"/><path d="M1 1.5h18v5.5l-1.5 1.5h-15l-1.5-1.500z" fill="#b9bba8"/><rect x="3" y="3" width="14" height="2.600" fill="#8a8c6e"/><rect x="11" y="3.300" width="5.500" height="2" fill="#5f6150"/><g fill="#6f7474"><rect x="2.500" y="10" width="2.800" height="2.500"/><rect x="6.700" y="10" width="2.800" height="2.500"/><rect x="10.800" y="10" width="2.800" height="2.500"/><rect x="15" y="10" width="3.200" height="2.500"/><rect x="2.500" y="14.200" width="2.800" height="2.500"/><rect x="6.700" y="14.200" width="2.800" height="2.500"/><rect x="10.800" y="14.200" width="2.800" height="2.500"/><rect x="15" y="14.200" width="3.200" height="4"/></g></svg></div>
<div class="lbl" style="right:416px;top:382px">Descuento Trueque</div>
<div class="fld num" style="left:1181px;top:376px;width:289px;height:29px;line-height:29px">0,0<svg class="calc" width="20" height="20" viewBox="0 0 20 20"><rect x="0" y="0" width="20" height="20" rx="1.5" fill="#555a5a"/><path d="M1 1.5h18v5.5l-1.5 1.5h-15l-1.5-1.500z" fill="#b9bba8"/><rect x="3" y="3" width="14" height="2.600" fill="#8a8c6e"/><rect x="11" y="3.300" width="5.500" height="2" fill="#5f6150"/><g fill="#6f7474"><rect x="2.500" y="10" width="2.800" height="2.500"/><rect x="6.700" y="10" width="2.800" height="2.500"/><rect x="10.800" y="10" width="2.800" height="2.500"/><rect x="15" y="10" width="3.200" height="2.500"/><rect x="2.500" y="14.200" width="2.800" height="2.500"/><rect x="6.700" y="14.200" width="2.800" height="2.500"/><rect x="10.800" y="14.200" width="2.800" height="2.500"/><rect x="15" y="14.200" width="3.200" height="4"/></g></svg></div>
<div class="lbl" style="right:416px;top:426px">Descuento Garantía</div>
<div class="fld num" style="left:1181px;top:420px;width:289px;height:30px;line-height:29px">91,36<svg class="calc" width="20" height="20" viewBox="0 0 20 20"><rect x="0" y="0" width="20" height="20" rx="1.5" fill="#555a5a"/><path d="M1 1.5h18v5.5l-1.5 1.5h-15l-1.5-1.500z" fill="#b9bba8"/><rect x="3" y="3" width="14" height="2.600" fill="#8a8c6e"/><rect x="11" y="3.300" width="5.500" height="2" fill="#5f6150"/><g fill="#6f7474"><rect x="2.500" y="10" width="2.800" height="2.500"/><rect x="6.700" y="10" width="2.800" height="2.500"/><rect x="10.800" y="10" width="2.800" height="2.500"/><rect x="15" y="10" width="3.200" height="2.500"/><rect x="2.500" y="14.200" width="2.800" height="2.500"/><rect x="6.700" y="14.200" width="2.800" height="2.500"/><rect x="10.800" y="14.200" width="2.800" height="2.500"/><rect x="15" y="14.200" width="3.200" height="4"/></g></svg></div>
<div class="lbl" style="right:416px;top:470px">Valor Dirección Técnica</div>
<div class="fld num" style="left:1181px;top:465px;width:289px;height:29px;line-height:29px">0,0<svg class="calc" width="20" height="20" viewBox="0 0 20 20"><rect x="0" y="0" width="20" height="20" rx="1.5" fill="#555a5a"/><path d="M1 1.5h18v5.5l-1.5 1.5h-15l-1.5-1.500z" fill="#b9bba8"/><rect x="3" y="3" width="14" height="2.600" fill="#8a8c6e"/><rect x="11" y="3.300" width="5.500" height="2" fill="#5f6150"/><g fill="#6f7474"><rect x="2.500" y="10" width="2.800" height="2.500"/><rect x="6.700" y="10" width="2.800" height="2.500"/><rect x="10.800" y="10" width="2.800" height="2.500"/><rect x="15" y="10" width="3.200" height="2.500"/><rect x="2.500" y="14.200" width="2.800" height="2.500"/><rect x="6.700" y="14.200" width="2.800" height="2.500"/><rect x="10.800" y="14.200" width="2.800" height="2.500"/><rect x="15" y="14.200" width="3.200" height="4"/></g></svg></div>
<!--/FORM-->
<div id="split" class="abs"></div>
<div id="btabs" class="abs"></div>
<div id="gtool" class="abs"></div>
<!--GRID-->
<div class="abs" style="left:899px;top:501px;width:10px;height:2.5px;background:repeating-linear-gradient(90deg,#b4b4b4 0 2.7px,transparent 2.7px 3.5px)"></div>
<div class="abs" style="left:972px;top:501px;width:10px;height:2.5px;background:repeating-linear-gradient(90deg,#b4b4b4 0 2.7px,transparent 2.7px 3.5px)"></div>
<div class="abs" style="left:923px;top:497px;width:1px;height:10px;background:#ccc"></div>
<div class="abs" style="left:958px;top:497px;width:1px;height:10px;background:#ccc"></div>
<div class="abs" style="left:936px;top:500px;width:0;height:0;border-left:4px solid transparent;border-right:4px solid transparent;border-top:4px solid #aaa"></div>
<div class="btab act" style="left:-1px;width:179px">Línea Avance de Obra</div>
<div class="btab" style="left:179px;width:178px">Avances Relacionados</div>
<div class="btab" style="left:358px;width:195px">Facturas Avance de Obra</div>
<div class="btab" style="left:554px;width:102px">Asignación</div>
<svg class="abs" style="left:14px;top:558px" width="20" height="20" viewBox="0 0 20 20"><rect x="0.700" y="1" width="16.500" height="17.500" rx="1.500" fill="#f3f3f3" stroke="#8a8a8a" stroke-width="1.300"/><rect x="2.500" y="3" width="13" height="13.500" fill="#ececec"/><circle cx="15.200" cy="5" r="4.600" fill="#f3ef5a" opacity=".9"/><circle cx="15.200" cy="5" r="1.800" fill="#fffde0"/></svg>
<svg class="abs" style="left:44px;top:558px" width="20" height="20" viewBox="0 0 20 20"><rect x="0.600" y="1.600" width="18.500" height="17" fill="#fdfdfd" stroke="#6e6e6e" stroke-width="1.200"/><rect x="13.600" y="2.200" width="5" height="15.800" fill="#8d8d8d"/><g stroke="#6a6a6a" stroke-width="1.200"><path d="M2.500 5h9M2.500 7.600h9M2.500 10.200h8M2.500 12.800h6M2.500 15.400h5"/></g><path d="M15.800 2.600l2.200 1.800-8 10.600-3 1.600 0.600-3.400z" fill="#d79a4a" stroke="#9a6420" stroke-width=".6"/><path d="M15.800 2.600l2.200 1.800-1.200 1.600-2.200-1.800z" fill="#d4568a"/><path d="M7 16.600l0.500-2 1.600 1.200z" fill="#333"/></svg>
<svg class="abs" style="left:73px;top:558px" width="20" height="20" viewBox="0 0 20 20"><path d="M1.700 8h16.600l-.5 11.400h-15.600z" fill="#8e9f34" stroke="#6d7d22" stroke-width="1"/><rect x="0.600" y="1.600" width="18.800" height="6.600" rx="2" fill="#93a43a" stroke="#6d7d22" stroke-width="1"/><rect x="2.800" y="3.400" width="14.400" height="2.600" rx="1.300" fill="#4d5138" stroke="#dfe6c0" stroke-width=".8"/><g fill="none" stroke="#d3dfa6" stroke-width="1.100" opacity=".9"><path d="M8 12.300l2-1.500 2 1.500"/><path d="M12.800 13.600l.2 2.500-2.300 .5"/><path d="M7.200 13.600l-.2 2.500 2.300 .5"/></g></svg>
<svg class="abs" style="left:102px;top:558px;opacity:.3" width="20" height="20" viewBox="0 0 20 20"><rect x="0.600" y="0.600" width="18.800" height="18.800" rx="1" fill="#c9d6ea" stroke="#8fa9d0" stroke-width="1.200"/><rect x="2.600" y="1.200" width="14.800" height="10" fill="#fff"/><rect x="2.600" y="1.800" width="14.800" height="2.200" fill="#f0a9a0"/><rect x="4.600" y="13" width="10.800" height="6.400" fill="#dfe3e8"/><rect x="6" y="14" width="3" height="4.500" fill="#a9b4c4"/></svg>
<svg class="abs" style="left:131px;top:559px;opacity:.17" width="17" height="17" viewBox="0 0 24 24"><path d="M10.200 1h3.600l0.500 3 1.700 0.700 2.500-1.800 2.500 2.500-1.800 2.500 0.700 1.700 3 0.500v3.600l-3 0.500-0.700 1.700 1.800 2.500-2.500 2.500-2.500-1.800-1.700 0.700-0.500 3h-3.600l-0.500-3-1.700-0.700-2.500 1.800-2.500-2.500 1.800-2.500-0.700-1.700-3-0.500v-3.600l3-0.500 0.700-1.700-1.800-2.500 2.500-2.500 2.500 1.800 1.700-0.700z M12 8.200a3.800 3.800 0 1 0 0 7.600a3.800 3.800 0 1 0 0-7.600z" fill="#7f9fd6" stroke="#4a6fb5" stroke-width=".8" fill-rule="evenodd"/></svg>
<div class="abs" style="left:152px;top:559px;font-size:13.4px;line-height:17px;color:#666;white-space:nowrap">12 Registros</div>
<div id="ghead" class="abs"><div class="cb" style="left:7px;top:8px"></div><div class="hc" style="left:55px;width:194px">Grupo Empresarial</div><div class="hc" style="left:249px;width:195px">Organización</div><div class="hc" style="left:444px;width:194px">Avance de Obra</div><div class="hc" style="left:638px;width:54px">Activo</div><div class="hc" style="left:692px;width:194px">Línea de Proyecto</div><div class="hc" style="left:886px;width:146px">Cantidad</div><div class="hc" style="left:1032px;width:146px">Precio</div><div class="hc" style="left:1178px;width:146px">Total Línea</div><div class="hc" style="left:1324px;width:195px">Centro de Costo</div><div class="hc" style="left:1519px;width:80px">Proyecto</div></div>
<div class="row sel" style="top:615px"><div class="cb" style="left:7px;top:8.5px"></div><svg style="position:absolute;left:32px;top:8.3px" width="19" height="16.500" viewBox="0 0 20 18" preserveAspectRatio="none"><rect x="0.600" y="0.600" width="18.500" height="16.600" fill="#fdfdfd" stroke="#6e6e6e" stroke-width="1.200"/><rect x="13.600" y="1.200" width="5" height="15.400" fill="#8d8d8d"/><g stroke="#6a6a6a" stroke-width="1.100"><path d="M2.500 3.800h9M2.500 6.200h9M2.500 8.600h8M2.500 11h6M2.500 13.400h5"/></g><path d="M15.800 1.600l2.200 1.800-8 10.400-3 1.600 0.600-3.400z" fill="#d79a4a" stroke="#9a6420" stroke-width=".6"/><path d="M15.800 1.600l2.200 1.800-1.200 1.600-2.200-1.800z" fill="#d4568a"/><path d="M7 15.400l0.500-2 1.600 1.200z" fill="#333"/></svg><div class="c" style="left:55px;width:194px">SUMMA PROYECTOS</div><div class="c" style="left:249px;width:195px">SUMMA PROYECTOS C.A.</div><div class="c" style="left:444px;width:194px">30/11/2024_AVANCE DE…</div><div class="c" style="left:638px;width:54px"><span class="dcb"><svg width="16" height="16" viewBox="0 0 16 16"><path d="M3.500 8.200 L6.600 11.300 L12.500 4.600" fill="none" stroke="#fff" stroke-opacity=".8" stroke-width="2.200"/></svg></span></div><div class="c" style="left:692px;width:194px">Replanteo_50_PRE001_…</div><div class="c r" style="left:886px;width:146px">41,77</div><div class="c r" style="left:1032px;width:146px">2,02</div><div class="c r" style="left:1178px;width:146px">84,38</div><div class="c" style="left:1324px;width:195px"></div><div class="c" style="left:1519px;width:80px"></div></div>
<div class="row odd" style="top:649px"><div class="cb" style="left:7px;top:8.5px"></div><div class="c" style="left:55px;width:194px">SUMMA PROYECTOS</div><div class="c" style="left:249px;width:195px">SUMMA PROYECTOS C.A.</div><div class="c" style="left:444px;width:194px">30/11/2024_AVANCE DE…</div><div class="c" style="left:638px;width:54px"><span class="dcb"><svg width="16" height="16" viewBox="0 0 16 16"><path d="M3.500 8.200 L6.600 11.300 L12.500 4.600" fill="none" stroke="#fff" stroke-opacity=".8" stroke-width="2.200"/></svg></span></div><div class="c" style="left:692px;width:194px">Trazado_60_PRE002_Tra…</div><div class="c r" style="left:886px;width:146px">47,26</div><div class="c r" style="left:1032px;width:146px">0,82</div><div class="c r" style="left:1178px;width:146px">38,75</div><div class="c" style="left:1324px;width:195px"></div><div class="c" style="left:1519px;width:80px"></div></div>
<div class="row " style="top:683px"><div class="cb" style="left:7px;top:8.5px"></div><div class="c" style="left:55px;width:194px">SUMMA PROYECTOS</div><div class="c" style="left:249px;width:195px">SUMMA PROYECTOS C.A.</div><div class="c" style="left:444px;width:194px">30/11/2024_AVANCE DE…</div><div class="c" style="left:638px;width:54px"><span class="dcb"><svg width="16" height="16" viewBox="0 0 16 16"><path d="M3.500 8.200 L6.600 11.300 L12.500 4.600" fill="none" stroke="#fff" stroke-opacity=".8" stroke-width="2.200"/></svg></span></div><div class="c" style="left:692px;width:194px">Relleno compactado (vivi…</div><div class="c r" style="left:886px;width:146px">2,67</div><div class="c r" style="left:1032px;width:146px">7,90</div><div class="c r" style="left:1178px;width:146px">21,09</div><div class="c" style="left:1324px;width:195px"></div><div class="c" style="left:1519px;width:80px"></div></div>
<div class="row odd" style="top:717px"><div class="cb" style="left:7px;top:8.5px"></div><div class="c" style="left:55px;width:194px">SUMMA PROYECTOS</div><div class="c" style="left:249px;width:195px">SUMMA PROYECTOS C.A.</div><div class="c" style="left:444px;width:194px">30/11/2024_AVANCE DE…</div><div class="c" style="left:638px;width:54px"><span class="dcb"><svg width="16" height="16" viewBox="0 0 16 16"><path d="M3.500 8.200 L6.600 11.300 L12.500 4.600" fill="none" stroke="#fff" stroke-opacity=".8" stroke-width="2.200"/></svg></span></div><div class="c" style="left:692px;width:194px">Resanteo de terreno_80_…</div><div class="c r" style="left:886px;width:146px">79,07</div><div class="c r" style="left:1032px;width:146px">0,79</div><div class="c r" style="left:1178px;width:146px">62,47</div><div class="c" style="left:1324px;width:195px"></div><div class="c" style="left:1519px;width:80px"></div></div>
<div class="abs" style="left:0;top:582px;width:1px;height:154px;background:#fff"></div>
<!--/GRID-->
</body>
</html>
